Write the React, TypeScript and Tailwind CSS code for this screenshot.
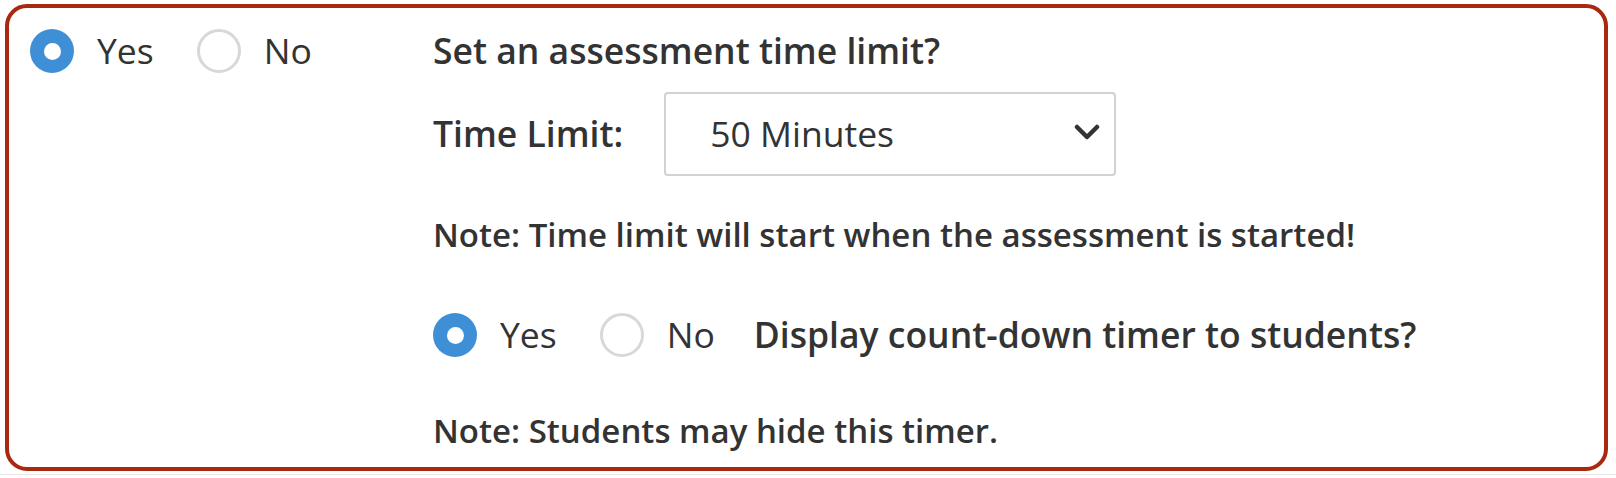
import React from 'react';

function Radio({ checked, label }: { checked?: boolean; label: string }) {
  return (
    <label className="flex items-center gap-[23px]">
      {checked ? (
        <span className="flex h-[44px] w-[44px] items-center justify-center rounded-full bg-[#3f8fd6]">
          <span className="h-[17px] w-[17px] rounded-full bg-white" />
        </span>
      ) : (
        <span className="h-[44px] w-[44px] rounded-full border-[3px] border-[#d8d8d8] bg-white" />
      )}
      <span className="font-normal">{label}</span>
    </label>
  );
}

function YesNo() {
  return (
    <div className="flex items-center gap-[43px]">
      <Radio checked label="Yes" />
      <Radio label="No" />
    </div>
  );
}

export default function App() {
  return (
    <div
      className="min-h-screen bg-white pl-[5px] pt-[4px] text-[35.5px] text-[#333333]"
      style={{ fontFamily: '"Open Sans", "Noto Sans", sans-serif' }}
    >
      <div className="h-[467px] w-[1603px] rounded-[22px] border-4 border-[#a8290f] pt-[17px]">
        <div className="flex">
          <div className="w-[424px] shrink-0 pl-[21px]">
            <div className="flex h-[52px] items-center">
              <YesNo />
            </div>
          </div>
          <div className="flex flex-col font-semibold">
            <div className="flex h-[52px] items-center">Set an assessment time limit?</div>
            <div className="mt-[15px] flex items-center gap-[41px]">
              <span>Time Limit:</span>
              <div className="flex h-[84px] w-[452px] items-center justify-between rounded-[4px] border-2 border-[#d2d2d2] pl-[44px] pr-[14px] font-normal">
                <span>50 Minutes</span>
                <svg width="26" height="18" viewBox="0 0 26 18" className="-mt-[4px]">
                  <polyline points="3,4 13,14 23,4" fill="none" stroke="#333" strokeWidth="4.5" strokeLinecap="round" strokeLinejoin="round" />
                </svg>
              </div>
            </div>
            <div className="mt-[33px] flex h-[52px] items-center text-[33px]">
              Note: Time limit will start when the assessment is started!
            </div>
            <div className="mt-[48px] flex h-[52px] items-center gap-[39px]">
              <YesNo />
              <span>Display count-down timer to students?</span>
            </div>
            <div className="mt-[44px] flex h-[52px] items-center text-[33px]">Note: Students may hide this timer.</div>
          </div>
        </div>
      </div>
      <div className="-ml-[5px] mt-[3px] border-t border-[#e8e8e8]" />
    </div>
  );
}
